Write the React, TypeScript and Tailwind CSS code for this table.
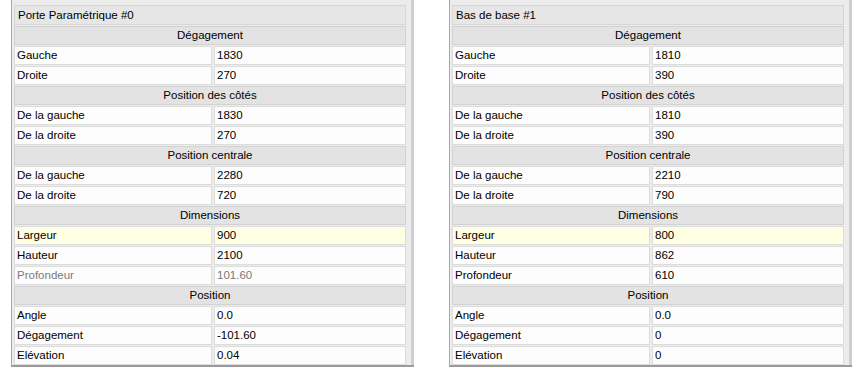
import React from 'react';

type Row =
  | { kind: 'title'; text: string }
  | { kind: 'section'; text: string }
  | { kind: 'field'; label: string; value: string; highlight?: boolean; disabled?: boolean };

function buildRows(title: string, v: string[], disabledDepth: boolean): Row[] {
  return [
    { kind: 'title', text: title },
    { kind: 'section', text: 'Dégagement' },
    { kind: 'field', label: 'Gauche', value: v[0] },
    { kind: 'field', label: 'Droite', value: v[1] },
    { kind: 'section', text: 'Position des côtés' },
    { kind: 'field', label: 'De la gauche', value: v[2] },
    { kind: 'field', label: 'De la droite', value: v[3] },
    { kind: 'section', text: 'Position centrale' },
    { kind: 'field', label: 'De la gauche', value: v[4] },
    { kind: 'field', label: 'De la droite', value: v[5] },
    { kind: 'section', text: 'Dimensions' },
    { kind: 'field', label: 'Largeur', value: v[6], highlight: true },
    { kind: 'field', label: 'Hauteur', value: v[7] },
    { kind: 'field', label: 'Profondeur', value: v[8], disabled: disabledDepth },
    { kind: 'section', text: 'Position' },
    { kind: 'field', label: 'Angle', value: v[9] },
    { kind: 'field', label: 'Dégagement', value: v[10] },
    { kind: 'field', label: 'Elévation', value: v[11] },
  ];
}

const panels = [
  buildRows('Porte Paramétrique #0', ['1830', '270', '1830', '270', '2280', '720', '900', '2100', '101.60', '0.0', '-101.60', '0.04'], true),
  buildRows('Bas de base #1', ['1810', '390', '1810', '390', '2210', '790', '800', '862', '610', '0.0', '0', '0'], false),
];

function PropertyPanel({ rows }: { rows: Row[] }) {
  return (
    <div className="w-[403px] flex bg-[#ececec] border-l border-[#a9a9a9] border-b-2 border-b-[#9a9a9a]">
      <div className="flex-1 flex flex-col gap-px pl-[2px] pr-[5px] pt-[5px]">
        {rows.map((row, i) => {
          if (row.kind === 'title') {
            return (
              <div key={i} className="h-[20px] border border-[#d6d6d6] bg-[#e6e6e6] px-[3px] leading-[18px]">
                {row.text}
              </div>
            );
          }
          if (row.kind === 'section') {
            return (
              <div key={i} className="h-[19px] border border-[#d2d2d2] bg-[#e3e3e3] text-center leading-[17px]">
                {row.text}
              </div>
            );
          }
          const bg = row.highlight ? 'bg-[#ffffe3]' : 'bg-[#fdfdfd]';
          const fg = row.disabled ? 'text-[#7a7a7a]' : 'text-black';
          return (
            <div key={i} className={`h-[19px] flex gap-[2px] ${fg}`}>
              <div className={`w-[198px] shrink-0 border border-[#dcdcdc] ${bg} px-[2px] leading-[17px]`}>{row.label}</div>
              <div className={`flex-1 border border-[#dcdcdc] ${bg} px-[2px] leading-[17px]`}>{row.value}</div>
            </div>
          );
        })}
      </div>
      <div className="w-[3px] bg-[#cfcfcf]" />
    </div>
  );
}

export default function App() {
  return (
    <div
      className="w-[861px] h-[368px] bg-white flex gap-[35px] pl-[11px] overflow-hidden text-[11.5px] text-black"
      style={{ fontFamily: '"Liberation Sans", Arial, sans-serif' }}
    >
      {panels.map((rows, i) => (
        <div key={i} className="self-start">
          <PropertyPanel rows={rows} />
        </div>
      ))}
    </div>
  );
}
